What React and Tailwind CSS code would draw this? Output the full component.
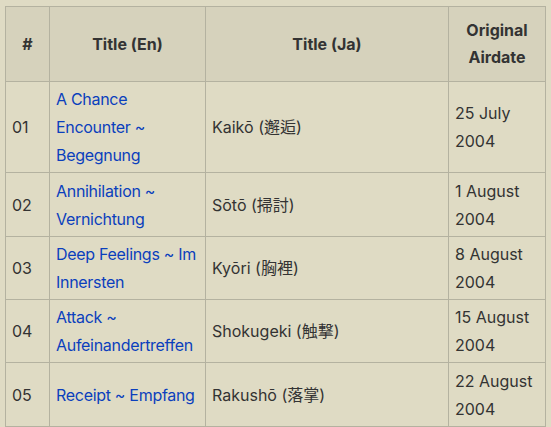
import React from "react";

const rows = [
  { n: "01", en: "A Chance Encounter ~ Begegnung", ja: "Kaikō (邂逅)", d: "25 July 2004", h: "h-[91px]" },
  { n: "02", en: "Annihilation ~ Vernichtung", ja: "Sōtō (掃討)", d: "1 August 2004", h: "h-[64px]" },
  { n: "03", en: "Deep Feelings ~ Im Innersten", ja: "Kyōri (胸裡)", d: "8 August 2004", h: "h-[63px]" },
  { n: "04", en: "Attack ~ Aufeinandertreffen", ja: "Shokugeki (触撃)", d: "15 August 2004", h: "h-[63px]" },
  { n: "05", en: "Receipt ~ Empfang", ja: "Rakushō (落掌)", d: "22 August 2004", h: "h-[64px]" },
];

export default function App() {
  return (
    <div
      className="w-[551px] h-[427px] bg-[#dfdbc4] overflow-hidden pt-[6px] pl-[5px]"
      style={{ fontFamily: 'Inter, "Noto Sans CJK JP", sans-serif' }}
    >
      <table className="border-collapse table-fixed w-[540px] text-[16px] leading-[28px] text-[#333]">
        <colgroup>
          <col className="w-[44px]" />
          <col className="w-[156px]" />
          <col className="w-[243px]" />
          <col className="w-[97px]" />
        </colgroup>
        <thead>
          <tr className="h-[75px]">
            {["#", "Title (En)", "Title (Ja)"].map((h) => (
              <th key={h} className="border border-[#b4b2a0] bg-[#d6d2bc] font-bold text-[16px] text-center align-middle px-[6px]">
                {h}
              </th>
            ))}
            <th className="border border-[#b4b2a0] bg-[#d6d2bc] font-bold text-[16px] leading-[27px] text-center align-middle px-[6px]">
              Original Airdate
            </th>
          </tr>
        </thead>
        <tbody>
          {rows.map((r) => (
            <tr key={r.n} className={r.h}>
              <td className="border border-[#b4b2a0] px-[6px] align-middle">{r.n}</td>
              <td className="border border-[#b4b2a0] px-[6px] align-middle text-[#0b3fbd] tracking-[-0.3px]">{r.en}</td>
              <td className="border border-[#b4b2a0] px-[6px] align-middle">{r.ja}</td>
              <td className="border border-[#b4b2a0] px-[6px] align-middle">{r.d}</td>
            </tr>
          ))}
        </tbody>
      </table>
    </div>
  );
}
